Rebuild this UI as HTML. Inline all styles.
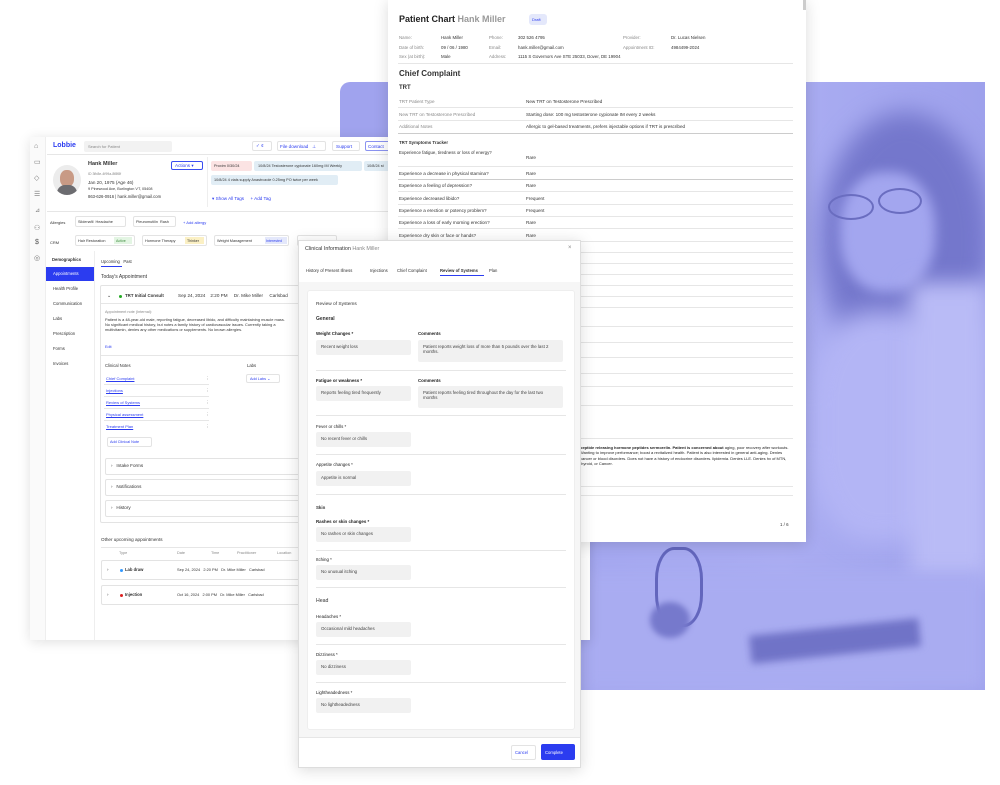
<!DOCTYPE html>
<html><head><meta charset="utf-8"><style>
*{margin:0;padding:0;box-sizing:border-box}
body{width:1000px;height:785px;background:#fff;position:relative;overflow:hidden;font-family:"Liberation Sans",sans-serif;color:#222}
.a{position:absolute;white-space:nowrap}
.t{position:absolute;white-space:nowrap;font-size:4.6px;color:#333}
.g{color:#888}
.b{font-weight:bold}
.ln{position:absolute;height:1px;background:#e6e6e6}
.blue{color:#2b3cf0}
.box{position:absolute;border:1px solid #e3e3e3;border-radius:2px;background:#fff}
.fld{position:absolute;background:#f1f1f1;border-radius:2px;font-size:4.4px;color:#444;padding:4px 5px}
.lbl{position:absolute;font-size:4.4px;color:#222;font-weight:bold;white-space:nowrap}
</style></head><body>

<!-- purple panel & photo -->
<div class="a" style="left:340px;top:82px;width:645px;height:608px;background:#a0a3ee;border-radius:10px 0 0 0"></div>
<div class="a" style="left:580px;top:82px;width:405px;height:608px;background:linear-gradient(90deg,#a4a7f0,#aaadf2 50%,#9ea1ec);overflow:hidden">
  <div class="a" style="left:240px;top:30px;width:170px;height:260px;border-radius:50%;background:#7477cc;filter:blur(12px)"></div>
  <div class="a" style="left:260px;top:90px;width:95px;height:120px;border-radius:45%;background:#a3a6ef;filter:blur(6px)"></div>
  <div class="a" style="left:248px;top:112px;width:46px;height:26px;border:2px solid #6a6dc0;border-radius:50%"></div>
  <div class="a" style="left:298px;top:106px;width:44px;height:26px;border:2px solid #6a6dc0;border-radius:50%"></div>
  <div class="a" style="left:230px;top:230px;width:150px;height:230px;border-radius:40%;background:#b3b5f5;filter:blur(12px)"></div>
  <div class="a" style="left:330px;top:200px;width:80px;height:300px;background:#b9bbf6;filter:blur(10px)"></div>
  <div class="a" style="left:0px;top:490px;width:405px;height:118px;background:#a9acf1;filter:blur(8px)"></div>
  <div class="a" style="left:75px;top:465px;width:48px;height:80px;border:3px solid #6366bd;border-radius:40%"></div>
  <div class="a" style="left:70px;top:520px;width:40px;height:36px;border-radius:50%;background:#7679cc;filter:blur(3px)"></div>
  <div class="a" style="left:170px;top:545px;width:170px;height:28px;background:#7073c7;filter:blur(4px);transform:rotate(-6deg)"></div>
</div>

<!-- dashboard -->
<div class="a" style="left:30px;top:137px;width:560px;height:503px;background:#fff;box-shadow:0 2px 12px rgba(0,0,0,.12)">
  <div class="a" style="left:0;top:0;width:16px;height:503px;background:#fafafa;border-right:1px solid #eee"></div>
</div>
<div class="t" style="left:34px;top:143px;font-size:7px;color:#777">⌂</div>
<div class="t" style="left:34px;top:158px;font-size:7px;color:#777">▭</div>
<div class="t" style="left:34px;top:174px;font-size:7px;color:#777">◇</div>
<div class="t" style="left:34px;top:190px;font-size:7px;color:#777">☰</div>
<div class="t" style="left:35px;top:207px;font-size:6px;color:#777">⊿</div>
<div class="t" style="left:34px;top:224px;font-size:7px;color:#777">⚇</div>
<div class="t" style="left:35px;top:239px;font-size:7px;color:#555">$</div>
<div class="t" style="left:34px;top:254px;font-size:7px;color:#777">◎</div>

<div class="a b blue" style="left:53px;top:142px;font-size:7px">Lobbie</div>
<div class="a" style="left:84px;top:141px;width:88px;height:11px;background:#f2f2f2;border-radius:2px"></div>
<div class="t g" style="left:88px;top:144px;font-size:4px">Search for Patient</div>
<div class="box" style="left:252px;top:141px;width:20px;height:10px"></div><div class="t blue" style="left:256px;top:143px">✓ ¢</div>
<div class="box" style="left:277px;top:141px;width:49px;height:10px"></div><div class="t blue" style="left:280px;top:143.5px">File download &nbsp; ⊥</div>
<div class="box" style="left:332px;top:141px;width:28px;height:10px"></div><div class="t blue" style="left:336px;top:143.5px">Support</div>
<div class="box" style="left:365px;top:141px;width:30px;height:10px;border-color:#8b93f0"></div><div class="t blue" style="left:368px;top:143.5px">Contact</div>
<div class="ln" style="left:47px;top:154px;width:345px"></div>

<div class="a" style="left:53px;top:165px;width:28px;height:30px;border-radius:50%;background:#ececec;overflow:hidden">
  <div class="a" style="left:7px;top:5px;width:14px;height:17px;border-radius:45%;background:#c89a85"></div>
  <div class="a" style="left:4px;top:20px;width:20px;height:12px;border-radius:8px 8px 2px 2px;background:#6c6c70"></div>
</div>
<div class="t b" style="left:88px;top:161px;font-size:5.5px">Hank Miller</div>
<div class="t g" style="left:88px;top:172px;font-size:3.5px">ID 3fb8e-4f99a-8f8f8f</div>
<div class="t" style="left:88px;top:180px">Jan 20, 1975 (Age 46)</div>
<div class="t" style="left:88px;top:187px;font-size:3.8px">9 Pinewood Ave, Burlington VT, 05408</div>
<div class="t" style="left:88px;top:194px;font-size:4.2px">863-626-0916 | hank.miller@gmail.com</div>
<div class="box" style="left:171px;top:161px;width:32px;height:9px;border-color:#3a4df0"></div><div class="t blue" style="left:175px;top:163px">Actions ▾</div>
<div class="a" style="left:207px;top:157px;width:1px;height:50px;background:#eee"></div>
<div class="a" style="left:211px;top:161px;width:41px;height:10px;background:#fbe3e3;border-radius:2px"></div><div class="t" style="left:214px;top:163.5px;font-size:3.8px">Proxim 0/30/24</div>
<div class="a" style="left:254px;top:161px;width:108px;height:10px;background:#e1edf5;border-radius:2px"></div><div class="t" style="left:258px;top:163.5px;font-size:3.8px">10/8/24 Testosterone cypionate 160mg IM Weekly</div>
<div class="a" style="left:364px;top:161px;width:30px;height:10px;background:#e1edf5;border-radius:2px"></div><div class="t" style="left:367px;top:163.5px;font-size:3.8px">10/8/24 st</div>
<div class="a" style="left:211px;top:175px;width:127px;height:10px;background:#e1edf5;border-radius:2px"></div><div class="t" style="left:214px;top:177.5px;font-size:3.8px">10/8/24 4 vials supply Anastrozole 0.25mg PO twice per week</div>
<div class="t blue" style="left:212px;top:196px">▾ Show All Tags &nbsp; &nbsp; + Add Tag</div>
<div class="ln" style="left:47px;top:211px;width:345px"></div>
<div class="t" style="left:50px;top:220px;font-size:4px">Allergies</div>
<div class="box" style="left:75px;top:216px;width:51px;height:11px"></div><div class="t" style="left:78px;top:220px;font-size:3.8px">Sildenafil &nbsp;Headache</div>
<div class="box" style="left:133px;top:216px;width:43px;height:11px"></div><div class="t" style="left:136px;top:220px;font-size:3.8px">Pleuromutilin &nbsp;Rash</div>
<div class="t blue" style="left:183px;top:220px;font-size:4px">+ Add allergy</div>
<div class="t" style="left:50px;top:240px;font-size:4px">CRM</div>
<div class="box" style="left:75px;top:235px;width:60px;height:11px"></div><div class="t" style="left:78px;top:239px;font-size:3.8px">Hair Restoration</div><div class="a" style="left:114px;top:237px;width:18px;height:7px;background:#e3f5e3"></div><div class="t" style="left:116px;top:239px;font-size:3.6px;color:#3a8a3a">Active</div>
<div class="box" style="left:142px;top:235px;width:65px;height:11px"></div><div class="t" style="left:145px;top:239px;font-size:3.8px">Hormone Therapy</div><div class="a" style="left:185px;top:237px;width:19px;height:7px;background:#fbf0c4"></div><div class="t" style="left:187px;top:239px;font-size:3.6px">Thinker</div>
<div class="box" style="left:214px;top:235px;width:75px;height:11px"></div><div class="t" style="left:217px;top:239px;font-size:3.8px">Weight Management</div><div class="a" style="left:265px;top:237px;width:22px;height:7px;background:#e4e8fb"></div><div class="t blue" style="left:266px;top:239px;font-size:3.6px">Interested</div>
<div class="box" style="left:297px;top:235px;width:40px;height:11px"></div>

<div class="t b" style="left:52px;top:257px;font-size:4.2px">Demographics</div>
<div class="a" style="left:46px;top:267px;width:48px;height:14px;background:#2b3cf0"></div><div class="t" style="left:53px;top:271px;font-size:4.2px;color:#fff">Appointments</div>
<div class="t" style="left:53px;top:286px;font-size:4.2px">Health Profile</div>
<div class="t" style="left:53px;top:301px;font-size:4.2px">Communication</div>
<div class="t" style="left:53px;top:316px;font-size:4.2px">Labs</div>
<div class="t" style="left:53px;top:331px;font-size:4.2px">Prescription</div>
<div class="t" style="left:53px;top:346px;font-size:4.2px">Forms</div>
<div class="t" style="left:53px;top:361px;font-size:4.2px">Invoices</div>
<div class="a" style="left:94px;top:251px;width:1px;height:389px;background:#eee"></div>

<div class="t" style="left:101px;top:259px;font-size:4.2px">Upcoming &nbsp; Past</div>
<div class="a" style="left:101px;top:266px;width:21px;height:1px;background:#2b3cf0"></div>
<div class="t" style="left:101px;top:274px;font-size:5px">Today's Appointment</div>
<div class="box" style="left:100px;top:285px;width:210px;height:238px"></div>
<div class="t" style="left:107px;top:293px;font-size:5px">⌄</div>
<div class="a" style="left:119px;top:295px;width:3px;height:3px;border-radius:50%;background:#2a2"></div>
<div class="t b" style="left:125px;top:293px;font-size:4.4px">TRT Initial Consult</div>
<div class="t" style="left:178px;top:293px">Sep 24, 2024 &nbsp; &nbsp;2:20 PM &nbsp; &nbsp; Dr. Mike Miller &nbsp; &nbsp; Carlsbad</div>
<div class="ln" style="left:101px;top:303px;width:208px"></div>
<div class="t g" style="left:105px;top:310px;font-size:3.8px">Appointment note (Internal):</div>
<div class="a" style="left:105px;top:317px;width:185px;font-size:3.9px;line-height:5.2px;color:#333;white-space:normal">Patient is a 48-year-old male, reporting fatigue, decreased libido, and difficulty maintaining muscle mass. No significant medical history, but notes a family history of cardiovascular issues. Currently taking a multivitamin, denies any other medications or supplements. No known allergies.</div>
<div class="t blue" style="left:105px;top:345px;font-size:3.8px">Edit</div>
<div class="ln" style="left:101px;top:355px;width:208px"></div>
<div class="t" style="left:105px;top:363px;font-size:4.2px">Clinical Notes</div>
<div class="t" style="left:247px;top:363px;font-size:4.2px">Labs</div>
<div class="t blue" style="left:106px;top:376px;text-decoration:underline;font-size:4px">Chief Complaint</div>
<div class="t blue" style="left:106px;top:388px;text-decoration:underline;font-size:4px">Injections</div>
<div class="t blue" style="left:106px;top:400px;text-decoration:underline;font-size:4px">Review of Systems</div>
<div class="t blue" style="left:106px;top:412px;text-decoration:underline;font-size:4px">Physical assessment</div>
<div class="t blue" style="left:106px;top:424px;text-decoration:underline;font-size:4px">Treatment Plan</div>
<div class="t g" style="left:205px;top:376px">⋮</div><div class="t g" style="left:205px;top:388px">⋮</div><div class="t g" style="left:205px;top:400px">⋮</div><div class="t g" style="left:205px;top:412px">⋮</div><div class="t g" style="left:205px;top:424px">⋮</div>
<div class="ln" style="left:104px;top:384px;width:105px"></div><div class="ln" style="left:104px;top:396px;width:105px"></div><div class="ln" style="left:104px;top:408px;width:105px"></div><div class="ln" style="left:104px;top:420px;width:105px"></div>
<div class="box" style="left:246px;top:374px;width:34px;height:9px"></div><div class="t blue" style="left:250px;top:376px;font-size:3.8px">Add Labs ⌄</div>
<div class="box" style="left:107px;top:437px;width:45px;height:10px"></div><div class="t blue" style="left:110px;top:440px;font-size:3.8px">Add Clinical Note</div>
<div class="box" style="left:105px;top:458px;width:205px;height:17px"></div><div class="t" style="left:111px;top:463px;font-size:4.6px">› &nbsp; Intake Forms</div>
<div class="box" style="left:105px;top:479px;width:205px;height:17px"></div><div class="t" style="left:111px;top:484px;font-size:4.6px">› &nbsp; Notifications</div>
<div class="box" style="left:105px;top:500px;width:205px;height:17px"></div><div class="t" style="left:111px;top:505px;font-size:4.6px">› &nbsp; History</div>
<div class="t" style="left:101px;top:537px;font-size:4.6px">Other upcoming appointments</div>
<div class="ln" style="left:101px;top:547px;width:205px"></div>
<div class="t g" style="left:119px;top:551px;font-size:3.8px">Type</div><div class="t g" style="left:177px;top:551px;font-size:3.8px">Date</div><div class="t g" style="left:211px;top:551px;font-size:3.8px">Time</div><div class="t g" style="left:237px;top:551px;font-size:3.8px">Practitioner</div><div class="t g" style="left:277px;top:551px;font-size:3.8px">Location</div>
<div class="box" style="left:101px;top:560px;width:210px;height:20px"></div>
<div class="t" style="left:107px;top:567px">›</div><div class="a" style="left:120px;top:569px;width:3px;height:3px;border-radius:50%;background:#39f"></div><div class="t b" style="left:125px;top:567px;font-size:4.2px">Lab draw</div><div class="t" style="left:177px;top:567px;font-size:3.9px">Sep 24, 2024 &nbsp; 2:20 PM &nbsp; Dr. Mike Miller &nbsp; Carlsbad</div>
<div class="box" style="left:101px;top:585px;width:210px;height:20px"></div>
<div class="t" style="left:107px;top:592px">›</div><div class="a" style="left:120px;top:594px;width:3px;height:3px;border-radius:50%;background:#d22"></div><div class="t b" style="left:125px;top:592px;font-size:4.2px">Injection</div><div class="t" style="left:177px;top:592px;font-size:3.9px">Oct 16, 2024 &nbsp; 2:00 PM &nbsp; Dr. Mike Miller &nbsp; Carlsbad</div>

<!-- patient chart -->
<div class="a" style="left:388px;top:0;width:418px;height:542px;background:#fff;box-shadow:0 2px 14px rgba(0,0,0,.15)"></div>
<div class="a" style="left:803px;top:0;width:3px;height:10px;background:#ccc"></div>
<div class="t b" style="left:399px;top:14px;font-size:9px;color:#222">Patient Chart <span style="color:#999">Hank Miller</span></div>
<div class="a" style="left:529px;top:14px;width:18px;height:11px;background:#e4e8fb;border-radius:3px"></div><div class="t blue" style="left:532px;top:17px;font-size:4px">Draft</div>
<div class="t g" style="left:399px;top:33px;font-size:4.4px;line-height:9.6px;white-space:pre">Name:
Date of birth:
Sex (at birth):</div>
<div class="t" style="left:441px;top:33px;font-size:4.4px;line-height:9.6px;white-space:pre">Hank Miller
09 / 06 / 1980
Male</div>
<div class="t g" style="left:489px;top:33px;font-size:4.4px;line-height:9.6px;white-space:pre">Phone:
Email:
Address:</div>
<div class="t" style="left:518px;top:33px;font-size:4.4px;line-height:9.6px;white-space:pre">302 526 4795
hank.miller@gmail.com
1115 S Governors Ave STE 25033, Dover, DE 19904</div>
<div class="t g" style="left:623px;top:33px;font-size:4.4px;line-height:9.6px;white-space:pre">Provider:
Appointment ID:</div>
<div class="t" style="left:671px;top:33px;font-size:4.4px;line-height:9.6px;white-space:pre">Dr. Lucas Nielsen
4984499-2024</div>
<div class="ln" style="left:398px;top:63px;width:395px"></div>
<div class="t b" style="left:399px;top:69px;font-size:8px">Chief Complaint</div>
<div class="t b" style="left:399px;top:85px;font-size:6px">TRT</div>
<div class="t g" style="left:399px;top:99px">TRT Patient Type</div><div class="t" style="left:526px;top:99px">New TRT on Testosterone Prescribed</div>
<div class="ln" style="left:398px;top:107px;width:395px"></div>
<div class="t g" style="left:399px;top:112px">New TRT on Testosterone Prescribed</div><div class="t" style="left:526px;top:112px">Starting dose: 100 mg testosterone cypionate IM every 2 weeks</div>
<div class="ln" style="left:398px;top:120px;width:395px"></div>
<div class="t g" style="left:399px;top:124px">Additional Notes</div><div class="t" style="left:526px;top:124px">Allergic to gel-based treatments, prefers injectable options if TRT is prescribed</div>
<div class="ln" style="left:398px;top:133px;width:395px;background:#ccc"></div>
<div class="t b" style="left:399px;top:140px;font-size:4.4px">TRT Symptoms Tracker</div>
<div class="a" style="left:399px;top:150px;font-size:4.4px;line-height:5.6px;color:#333;width:115px;white-space:normal">Experience fatigue, tiredness or loss of energy?</div><div class="t" style="left:526px;top:155px">Rare</div>
<div class="ln" style="left:398px;top:166px;width:395px"></div>
<div class="t" style="left:399px;top:171px">Experience a decrease in physical stamina?</div><div class="t" style="left:526px;top:171px">Rare</div>
<div class="ln" style="left:398px;top:179px;width:395px;background:#ccc"></div>
<div class="t" style="left:399px;top:183px">Experience a feeling of depression?</div><div class="t" style="left:526px;top:183px">Rare</div>
<div class="ln" style="left:398px;top:191px;width:395px"></div>
<div class="t" style="left:399px;top:196px">Experience decreased libido?</div><div class="t" style="left:526px;top:196px">Frequent</div>
<div class="ln" style="left:398px;top:204px;width:395px"></div>
<div class="t" style="left:399px;top:208px">Experience a erection or potency problem?</div><div class="t" style="left:526px;top:208px">Frequent</div>
<div class="ln" style="left:398px;top:216px;width:395px"></div>
<div class="t" style="left:399px;top:220px">Experience a loss of early morning erection?</div><div class="t" style="left:526px;top:220px">Rare</div>
<div class="ln" style="left:398px;top:228px;width:395px"></div>
<div class="t" style="left:399px;top:233px">Experience dry skin or face or hands?</div><div class="t" style="left:526px;top:233px">Rare</div>
<div class="ln" style="left:398px;top:241px;width:395px"></div>
<div class="ln" style="left:580px;top:252px;width:213px"></div>
<div class="ln" style="left:580px;top:263px;width:213px"></div>
<div class="ln" style="left:580px;top:274px;width:213px"></div>
<div class="ln" style="left:580px;top:285px;width:213px"></div>
<div class="ln" style="left:580px;top:296px;width:213px"></div>
<div class="ln" style="left:580px;top:307px;width:213px"></div>
<div class="ln" style="left:580px;top:326px;width:213px"></div>
<div class="ln" style="left:580px;top:342px;width:213px"></div>
<div class="ln" style="left:580px;top:357px;width:213px"></div>
<div class="ln" style="left:580px;top:373px;width:213px"></div>
<div class="ln" style="left:580px;top:386px;width:213px"></div>
<div class="ln" style="left:580px;top:405px;width:213px"></div>
<div class="ln" style="left:580px;top:438px;width:213px"></div>
<div class="a" style="left:580px;top:445px;width:212px;font-size:4px;line-height:5.4px;color:#222;white-space:normal;overflow:hidden;height:36px"><b>peptide releasing hormone peptides sermorelin. Patient is concerned about</b> aging, poor recovery after workouts. Wanting to improve performance; boost a revitalized health. Patient is also interested in general anti-aging. Denies cancer or blood disorders. Does not have a history of endocrine disorders. lipidemia. Denies LLE. Denies hx of MTN, thyroid, or Cancer.</div>
<div class="ln" style="left:580px;top:486px;width:213px"></div>
<div class="ln" style="left:580px;top:495px;width:213px"></div>
<div class="t" style="left:780px;top:522px;font-size:4.4px">1 / 6</div>

<!-- modal -->
<div class="a" style="left:298px;top:240px;width:283px;height:528px;background:#fff;border:1px solid #ddd;box-shadow:0 2px 14px rgba(0,0,0,.15)"></div>
<div class="t" style="left:305px;top:246px;font-size:5.4px">Clinical Information <span style="color:#888">Hank Miller</span></div>
<div class="t g" style="left:568px;top:245px;font-size:6px">×</div>
<div class="t" style="left:306px;top:268px;font-size:4.2px">History of Present Illness</div>
<div class="t" style="left:370px;top:268px;font-size:4.2px">Injections</div>
<div class="t" style="left:397px;top:268px;font-size:4.2px">Chief Complaint</div>
<div class="t b" style="left:440px;top:268px;font-size:4.2px">Review of Systems</div>
<div class="t" style="left:489px;top:268px;font-size:4.2px">Plan</div>
<div class="a" style="left:440px;top:275px;width:44px;height:1px;background:#2b3cf0"></div>
<div class="a" style="left:299px;top:282px;width:281px;height:455px;background:#f6f6f6"></div>
<div class="a" style="left:307px;top:290px;width:268px;height:440px;background:#fff;border-radius:3px;border:1px solid #eee"></div>
<div class="t" style="left:316px;top:302px;font-size:4.8px">Review of Systems</div>
<div class="t b" style="left:316px;top:316px;font-size:5px">General</div>
<div class="lbl" style="left:316px;top:331px">Weight Changes *</div>
<div class="lbl" style="left:418px;top:331px">Comments</div>
<div class="fld" style="left:316px;top:340px;width:95px;height:15px">Recent weight loss</div>
<div class="fld" style="left:418px;top:340px;width:145px;height:22px;line-height:5.4px;white-space:normal">Patient reports weight loss of more than 5 pounds over the last 2 months.</div>
<div class="ln" style="left:316px;top:370px;width:250px"></div>
<div class="lbl" style="left:316px;top:378px">Fatigue or weakness *</div>
<div class="lbl" style="left:418px;top:378px">Comments</div>
<div class="fld" style="left:316px;top:386px;width:95px;height:15px">Reports feeling tired frequently</div>
<div class="fld" style="left:418px;top:386px;width:145px;height:22px;line-height:5.4px;white-space:normal">Patient reports feeling tired throughout the day for the last two months</div>
<div class="ln" style="left:316px;top:415px;width:250px"></div>
<div class="lbl" style="left:316px;top:424px;font-weight:normal">Fever or chills *</div>
<div class="fld" style="left:316px;top:432px;width:95px;height:15px">No recent fever or chills</div>
<div class="ln" style="left:316px;top:454px;width:250px"></div>
<div class="lbl" style="left:316px;top:462px;font-weight:normal">Appetite changes *</div>
<div class="fld" style="left:316px;top:471px;width:95px;height:15px">Appetite is normal</div>
<div class="ln" style="left:316px;top:494px;width:250px"></div>
<div class="t b" style="left:316px;top:505px;font-size:4.4px">Skin</div>
<div class="lbl" style="left:316px;top:519px">Rashes or skin changes *</div>
<div class="fld" style="left:316px;top:527px;width:95px;height:15px">No rashes or skin changes</div>
<div class="ln" style="left:316px;top:550px;width:250px"></div>
<div class="lbl" style="left:316px;top:557px;font-weight:normal">Itching *</div>
<div class="fld" style="left:316px;top:565px;width:95px;height:15px">No unusual itching</div>
<div class="ln" style="left:316px;top:587px;width:250px"></div>
<div class="t" style="left:316px;top:598px;font-size:5.2px">Head</div>
<div class="lbl" style="left:316px;top:614px;font-weight:normal">Headaches *</div>
<div class="fld" style="left:316px;top:622px;width:95px;height:15px">Occasional mild headaches</div>
<div class="ln" style="left:316px;top:644px;width:250px"></div>
<div class="lbl" style="left:316px;top:652px;font-weight:normal">Dizziness *</div>
<div class="fld" style="left:316px;top:660px;width:95px;height:15px">No dizziness</div>
<div class="ln" style="left:316px;top:682px;width:250px"></div>
<div class="lbl" style="left:316px;top:690px;font-weight:normal">Lightheadedness *</div>
<div class="fld" style="left:316px;top:698px;width:95px;height:15px">No lightheadedness</div>
<div class="ln" style="left:299px;top:737px;width:281px"></div>
<div class="box" style="left:511px;top:745px;width:25px;height:15px"></div><div class="t blue" style="left:515px;top:750px;font-size:4.2px">Cancel</div>
<div class="a" style="left:541px;top:744px;width:34px;height:16px;background:#2b3cf0;border-radius:2px"></div><div class="t" style="left:545px;top:750px;font-size:4.2px;color:#fff">Complete</div>

</body></html>
